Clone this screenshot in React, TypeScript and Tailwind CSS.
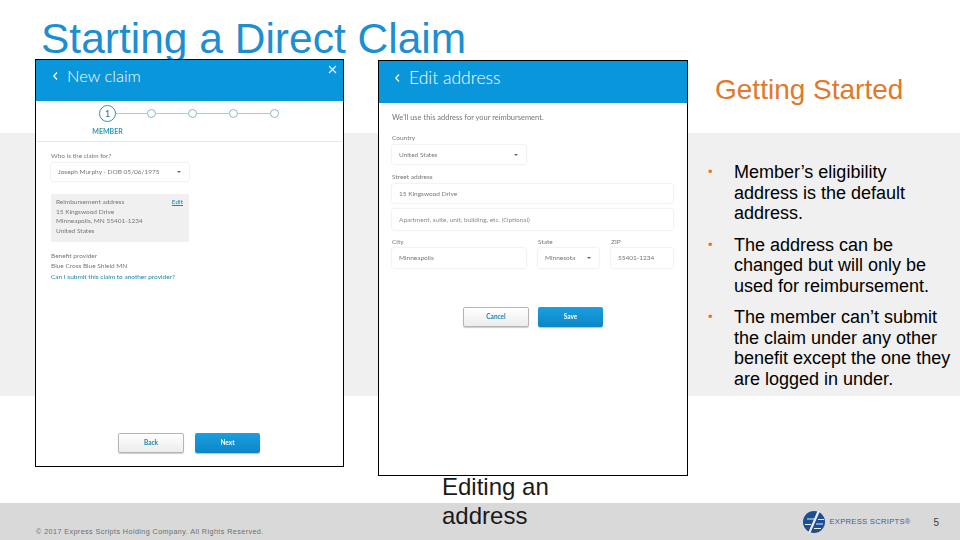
const lato = "font-['Lato','Liberation_Sans',sans-serif]";

function Field({ text, caret, className }: { text: string; caret?: boolean; className: string }) {
  return (
    <div className={`flex items-center justify-between bg-white rounded-[2px] shadow-[0_0_2px_rgba(0,0,0,0.18)] pl-[7px] pr-[8px] text-[6.5px] text-[#777] ${className}`}>
      <span className="whitespace-nowrap">{text}</span>
      {caret && <span className="w-0 h-0 border-x-[2.5px] border-x-transparent border-t-[2.5px] border-t-[#666]" />}
    </div>
  );
}

function Btn({ label, primary }: { label: string; primary?: boolean }) {
  return primary ? (
    <div className="w-[65px] h-[20px] flex items-center justify-center rounded-[2px] bg-gradient-to-b from-[#1a9fe0] to-[#0b86c6] text-white text-[6.5px] font-bold shadow-[0_1px_1px_rgba(0,0,0,0.25)]">
      {label}
    </div>
  ) : (
    <div className="w-[66px] h-[20px] flex items-center justify-center rounded-[2px] bg-gradient-to-b from-white to-[#ececec] border border-[#b5b5b5] text-[#1c86a8] text-[6.5px] font-bold shadow-[0_1px_1px_rgba(0,0,0,0.2)]">
      {label}
    </div>
  );
}

function Chevron() {
  return (
    <svg width="7" height="10" viewBox="0 0 7 10" fill="none" stroke="white" strokeWidth="1.2">
      <path d="M5 1.5 1.8 5 5 8.5" />
    </svg>
  );
}

function Stepper() {
  return (
    <div className="flex items-center ml-[63px] mt-[4px]">
      <div className="w-[17px] h-[17px] rounded-full border border-[#2c8fa8] flex items-center justify-center text-[9px] text-[#2b6f82] shrink-0">1</div>
      {[0, 1, 2, 3].map((i) => (
        <div key={i} className="flex items-center shrink-0">
          <div className={`h-px bg-[#a5cdd8] ${i === 0 ? "w-[31px]" : "w-[32px]"}`} />
          <div className="w-[9px] h-[9px] rounded-full border border-[#8fb5c0]" />
        </div>
      ))}
    </div>
  );
}

function NewClaim() {
  return (
    <div className={`w-[309px] h-[408px] border border-black bg-white flex flex-col shrink-0 ${lato}`}>
      <div className="h-[41px] bg-[#0a96da] flex items-center justify-between pl-[16px] pr-[6px] pb-[9px] shrink-0">
        <div className="flex items-center gap-[8px] text-white text-[16.5px] font-light">
          <Chevron />
          <span>New claim</span>
        </div>
        <svg className="mb-[13px]" width="9" height="9" viewBox="0 0 9 9" stroke="white" strokeWidth="1.1">
          <path d="M1 1l7 7M8 1 1 8" />
        </svg>
      </div>
      <div className="blur-[0.3px] flex-1 flex flex-col">
        <Stepper />
        <div className="ml-[48px] w-[47px] text-center mt-[5px] text-[7px] font-bold text-[#2c9ab5] leading-[9px] h-[14px]">MEMBER</div>
        <div className="h-px bg-[#e8e8e8]" />
        <div className="pl-[15px] w-[153px] flex-1 flex flex-col text-[6.5px] text-[#777]">
          <div className="mt-[9px] leading-[9px] whitespace-nowrap">Who is the claim for?</div>
          <Field text="Joseph Murphy - DOB 05/06/1975" caret className="h-[18px] w-[138px] mt-[3px] shrink-0" />
          <div className="mt-[13px] h-[48px] w-[138px] shrink-0 bg-[#f0f0f0] pl-[5px] pr-[6px] pt-[3px] leading-[9.6px]">
            <div className="flex justify-between">
              <span>Reimbursement address</span>
              <span className="text-[#1c86a8] underline">Edit</span>
            </div>
            <div>15 Kingswood Drive</div>
            <div>Minneapolis, MN 55401-1234</div>
            <div>United States</div>
          </div>
          <div className="mt-[9px] leading-[10px] whitespace-nowrap">
            <div>Benefit provider</div>
            <div>Blue Cross Blue Shield MN</div>
            <div className="text-[#1c86a8] pt-px">Can I submit this claim to another provider?</div>
          </div>
          <div className="flex-1" />
        </div>
        <div className="flex gap-[11px] pl-[82px] pb-[13px]">
          <Btn label="Back" />
          <Btn label="Next" primary />
        </div>
      </div>
    </div>
  );
}

function EditAddress() {
  return (
    <div className={`w-[310px] h-[416px] border border-black bg-white flex flex-col ${lato}`}>
      <div className="h-[42px] bg-[#0a96da] flex items-center gap-[8px] pl-[15px] pb-[8px] text-white text-[17.5px] font-light shrink-0">
        <Chevron />
        <span>Edit address</span>
      </div>
      <div className="blur-[0.3px] pl-[13px] pr-[14px] flex flex-col text-[6.5px] text-[#777]">
        <div className="mt-[10px] leading-[10px] text-[7.5px] whitespace-nowrap">We'll use this address for your reimbursement.</div>
        <div className="mt-[10px] leading-[9px]">Country</div>
        <Field text="United States" caret className="h-[19px] w-[134px] mt-[3px]" />
        <div className="mt-[8px] leading-[9px]">Street address</div>
        <Field text="15 Kingswood Drive" className="h-[19px] mt-[3px]" />
        <Field text="Apartment, suite, unit, building, etc. (Optional)" className="h-[21px] mt-[6px] !text-[#8a8a8a]" />
        <div className="flex gap-[12px] mt-[7px]">
          <div className="w-[134px]">
            <div className="leading-[9px]">City</div>
            <Field text="Minneapolis" className="h-[20px] mt-[2px]" />
          </div>
          <div className="w-[61px]">
            <div className="leading-[9px]">State</div>
            <Field text="Minnesota" caret className="h-[20px] mt-[2px]" />
          </div>
          <div className="w-[62px]">
            <div className="leading-[9px]">ZIP</div>
            <Field text="55401-1234" className="h-[20px] mt-[2px]" />
          </div>
        </div>
        <div className="flex gap-[9px] ml-[71px] mt-[39px]">
          <Btn label="Cancel" />
          <Btn label="Save" primary />
        </div>
      </div>
    </div>
  );
}

function Logo() {
  return (
    <svg width="22" height="22" viewBox="0 0 22 22">
      <circle cx="11" cy="11" r="11" fill="#1d4e8f" />
      <path d="M14.5 0 5 22h2.4L17 0z" fill="#e8eef5" />
      <path d="M4 7.5h8v1H4zM15 8h6v1h-6zM2 13h6v1H2zM13 12.5h7v1h-7zM11 17h7v1h-7z" fill="#e8eef5" />
    </svg>
  );
}

const bullets = [
  ["Member’s eligibility", "address is the default", "address."],
  ["The address can be", "changed but will only be", "used for reimbursement."],
  ["The member can’t submit", "the claim under any other", "benefit except the one they", "are logged in under."],
];

export default function App() {
  return (
    <div className="grid w-[960px] h-[540px] overflow-hidden bg-white font-['Liberation_Sans',sans-serif]">
      <div className="col-start-1 row-start-1 flex flex-col">
        <div className="h-[133px]" />
        <div className="h-[263px] bg-[#f0f0f0]" />
        <div className="h-[107px]" />
        <div className="h-[37px] bg-[#d9d9d9] flex items-end pl-[36px] pr-[21px]">
          <span className="mb-[3px] text-[7.2px] tracking-[0.42px] text-[#6e6e6e] leading-[10px] whitespace-nowrap">© 2017 Express Scripts Holding Company. All Rights Reserved.</span>
          <div className="ml-auto flex items-center mb-[7px]">
            <Logo />
            <span className="ml-[4px] w-[83px] text-[7.6px] tracking-[0.3px] text-[#3a5f94] whitespace-nowrap">EXPRESS SCRIPTS®</span>
            <span className="ml-[21px] text-[10px] text-[#404040]">5</span>
          </div>
        </div>
      </div>

      <div className="col-start-1 row-start-1 flex flex-col">
        <div className="h-[59px] pl-[41px] pt-[15px] text-[42.5px] leading-[48px] text-[#1b8fd2] whitespace-nowrap">Starting a Direct Claim</div>
        <div className="flex items-start pl-[35px]">
          <NewClaim />
          <div className="ml-[34px] mt-px w-[310px] shrink-0">
            <EditAddress />
            <div className="-mt-[4px] pl-[64px] text-[24px] leading-[29px] text-[#1a1a1a] w-[190px]">Editing an address</div>
          </div>
          <div className="pl-[20px] flex flex-col">
            <div className="ml-[7px] mt-[13px] text-[28px] leading-[36px] text-[#e0792a] whitespace-nowrap">Getting Started</div>
            <div className="mt-[54px] flex flex-col gap-[11px]">
              {bullets.map((lines, i) => (
                <div key={i} className="flex">
                  <span className="w-[26px] text-[#e0792a] text-[13px] leading-[20.5px] shrink-0">•</span>
                  <div className="text-[18px] leading-[20.5px] text-black whitespace-nowrap">
                    {lines.map((l) => (
                      <div key={l}>{l}</div>
                    ))}
                  </div>
                </div>
              ))}
            </div>
          </div>
        </div>
      </div>
    </div>
  );
}
